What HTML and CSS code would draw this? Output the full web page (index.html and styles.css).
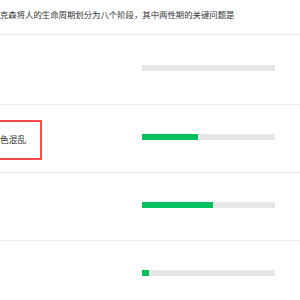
FILE: index.html
```html
<!DOCTYPE html>
<html lang="zh-CN">
<head>
    <meta charset="UTF-8">
    <meta name="viewport" content="width=device-width, initial-scale=1.0">
    <title>投票结果</title>
    <link rel="stylesheet" href="styles.css">
</head>
<body>
    <div class="poll">
        <div class="question">克森将人的生命周期划分为八个阶段，其中两性期的关键问题是</div>
        <div class="option">
            <div class="option-text"></div>
            <div class="bar"><div class="bar-fill" style="width: 0%"></div></div>
        </div>
        <div class="option">
            <div class="option-text">
                <span class="answer">色混乱</span>
            </div>
            <div class="bar"><div class="bar-fill" style="width: 42%"></div></div>
        </div>
        <div class="option">
            <div class="option-text"></div>
            <div class="bar"><div class="bar-fill" style="width: 53.5%"></div></div>
        </div>
        <div class="option">
            <div class="option-text"></div>
            <div class="bar"><div class="bar-fill" style="width: 5%"></div></div>
        </div>
    </div>
</body>
</html>
```

FILE: styles.css
```css
body {
    margin: 0;
    background: #fff;
    font-family: "Noto Sans CJK SC", "Liberation Sans", sans-serif;
    color: #333;
    overflow: hidden;
}

.poll {
    width: 300px;
}

.question {
    font-size: 8.4px;
    line-height: 12px;
    padding: 8px 0 14px 0;
    border-bottom: 1px solid #ececec;
    white-space: nowrap;
}

.option {
    display: flex;
    align-items: center;
    height: 67px;
    border-bottom: 1px solid #ececec;
}

.option:nth-child(2) {
    height: 69px;
}

.option-text {
    flex: 1;
    font-size: 8.7px;
    line-height: 12px;
}

.answer {
    display: inline-block;
    padding: 12px 14px 12px 0;
    border: 2px solid #fb4a4a;
    border-left: 0;
    margin-top: 2px;
}

.bar {
    width: 133px;
    height: 6px;
    margin-right: 25px;
    margin-bottom: 3px;
    background: #e6e6e6;
}

.bar-fill {
    height: 100%;
    background: #07c160;
}
```
